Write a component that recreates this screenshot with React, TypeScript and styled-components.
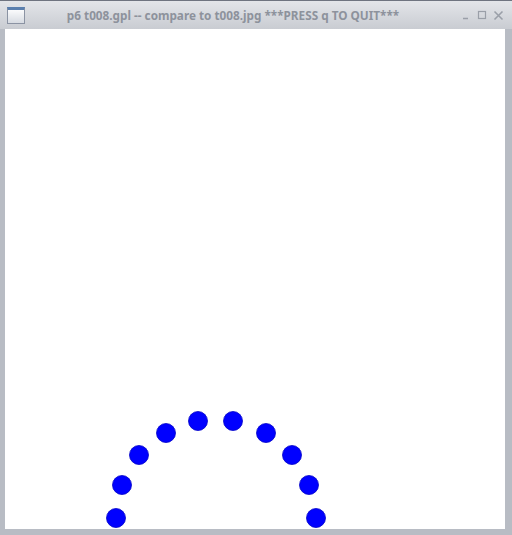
import React from "react";
import styled, { createGlobalStyle } from "styled-components";

const Global = createGlobalStyle`
  html, body { margin: 0; padding: 0; background: #ffffff; }
  body { width: 512px; height: 535px; overflow: hidden; }
`;

const Window = styled.div`
  width: 512px;
  height: 535px;
  display: flex;
  flex-direction: column;
  background: #b8bcc4;
  box-sizing: border-box;
  border-top: 1px solid #6f7480;
`;

const TitleBar = styled.div`
  height: 28px;
  display: flex;
  align-items: center;
  padding: 0 8px 0 7px;
  background: linear-gradient(#e3e5e9, #c9ccd2);
  box-sizing: border-box;
`;

const AppIcon = styled.div`
  width: 18px;
  height: 17px;
  box-sizing: border-box;
  border: 1px solid #8b93a3;
  border-top: 3px solid #5a7fae;
  background: linear-gradient(#fafbfc, #d7dbe2);
`;

const Title = styled.div`
  flex: 1;
  text-align: center;
  font-family: "Noto Sans", sans-serif;
  font-weight: bold;
  font-size: 11.75px;
  color: #8d929c;
  padding-right: 20px;
  white-space: nowrap;
`;

const Buttons = styled.div`
  display: flex;
  align-items: center;
  gap: 6px;
`;

const Body = styled.div`
  flex: 1;
  display: flex;
  padding: 0 7px 6px 5px;
  min-height: 0;
`;

const Plot = styled.svg`
  display: block;
  width: 500px;
  height: 500px;
  background: #ffffff;
`;

const dots: [number, number][] = [
  [111, 489], [117, 456], [134, 426], [161, 404], [193, 392],
  [228, 392], [261, 404], [287, 426], [304, 456], [311, 489],
];

export default function App() {
  return (
    <>
      <Global />
      <Window>
        <TitleBar>
          <AppIcon />
          <Title>p6 t008.gpl -- compare to t008.jpg ***PRESS q TO QUIT***</Title>
          <Buttons>
            <svg width="10" height="10" viewBox="0 0 10 10">
              <path d="M2 8.5H7" stroke="#9a9fa8" strokeWidth="1.5" />
            </svg>
            <svg width="10" height="10" viewBox="0 0 10 10">
              <rect x="1.5" y="1.5" width="7" height="7" fill="none" stroke="#9a9fa8" strokeWidth="1.2" />
            </svg>
            <svg width="11" height="11" viewBox="0 0 11 11">
              <path d="M1.5 1.5L9.5 9.5M9.5 1.5L1.5 9.5" stroke="#9a9fa8" strokeWidth="1.6" />
            </svg>
          </Buttons>
        </TitleBar>
        <Body>
          <Plot viewBox="0 0 500 500">
            {dots.map(([x, y], i) => (
              <circle key={i} cx={x} cy={y} r={9.5} fill="#0000ff" stroke="#0000c8" strokeWidth={0.8} />
            ))}
          </Plot>
        </Body>
      </Window>
    </>
  );
}
